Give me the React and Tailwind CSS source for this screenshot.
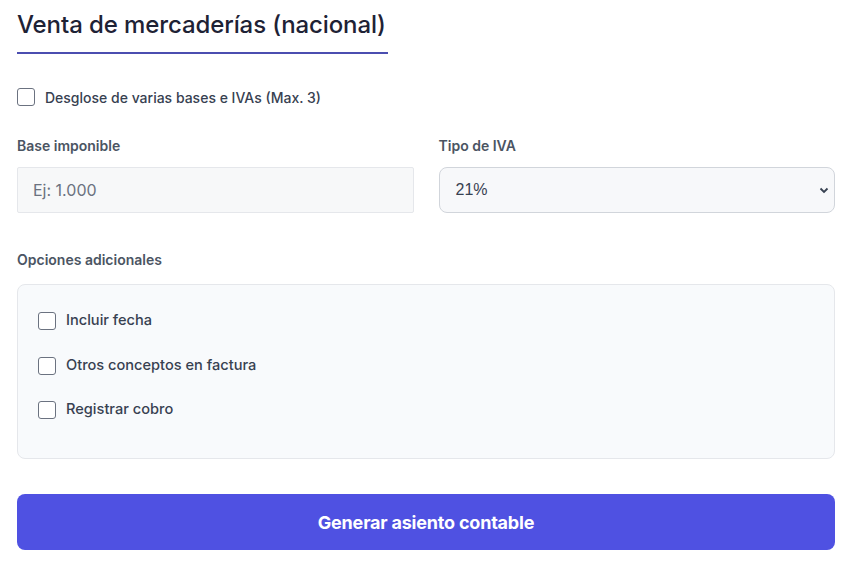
import React from "react";

function Box({ className = "" }) {
  return (
    <span
      className={
        "inline-block w-[18px] h-[18px] rounded-[3px] border border-[#6b7280] bg-white shrink-0 " +
        className
      }
    />
  );
}

export default function App() {
  return (
    <div
      className="w-[844px] h-[565px] bg-white px-[17px] pr-[9px] text-[#1f2937]"
      style={{ fontFamily: "Inter, 'Noto Sans', sans-serif" }}
    >
      <div className="pt-[9px]">
        <h1 className="inline-block text-[24px] leading-[32px] font-medium text-[#1e2235] pb-[11px] border-b-2 border-[#4b4eb0] w-[371px] tracking-[-0.1px]">
          Venta de mercaderías (nacional)
        </h1>
      </div>

      <label className="flex items-center gap-[10px] mt-[34px] h-[18px]">
        <Box />
        <span className="text-[14px] font-medium text-[#374151]">
          Desglose de varias bases e IVAs (Max. 3)
        </span>
      </label>

      <div className="grid grid-cols-2 gap-[25px] mt-[31px]">
        <div>
          <div className="text-[14px] leading-[18px] font-semibold text-[#4b5563]">
            Base imponible
          </div>
          <div className="mt-[12px] h-[46px] bg-[#f7f8f9] border border-[#e5e7eb] rounded-[2px] flex items-center px-[15px]">
            <span className="text-[16px] text-[#6b7280]">Ej: 1.000</span>
          </div>
        </div>
        <div>
          <div className="text-[14px] leading-[18px] font-semibold text-[#4b5563]">
            Tipo de IVA
          </div>
          <div className="relative mt-[12px] h-[46px] bg-[#f7f8fa] border border-[#d1d5db] rounded-[8px] flex items-center px-[16px]">
            <span
              className="text-[16px] text-[#374151]"
              style={{ fontFamily: "'Liberation Sans', Arial, sans-serif" }}
            >
              21%
            </span>
            <svg
              className="absolute right-[5px] top-1/2 -translate-y-1/2"
              width="10"
              height="8"
              viewBox="0 0 10 8"
            >
              <path
                d="M1.5 2.5 L5 6 L8.5 2.5"
                fill="none"
                stroke="#374151"
                strokeWidth="1.8"
              />
            </svg>
          </div>
        </div>
      </div>

      <div className="mt-[38px] text-[14px] leading-[18px] font-semibold text-[#4b5563]">
        Opciones adicionales
      </div>

      <div className="mt-[15px] h-[175px] bg-[#f8fafc] border border-[#e5e7eb] rounded-[8px] pl-[20px] pt-[14px] flex flex-col">
        {["Incluir fecha", "Otros conceptos en factura", "Registrar cobro"].map(
          (t) => (
            <label key={t} className="flex items-center gap-[10px] h-[44.5px]">
              <Box />
              <span className="text-[14.6px] font-medium text-[#374151]">{t}</span>
            </label>
          )
        )}
      </div>

      <button className="mt-[35px] w-full h-[56px] rounded-[8px] bg-[#4f51e2] text-white text-[18px] font-bold tracking-[-0.2px]">
        Generar asiento contable
      </button>
    </div>
  );
}
